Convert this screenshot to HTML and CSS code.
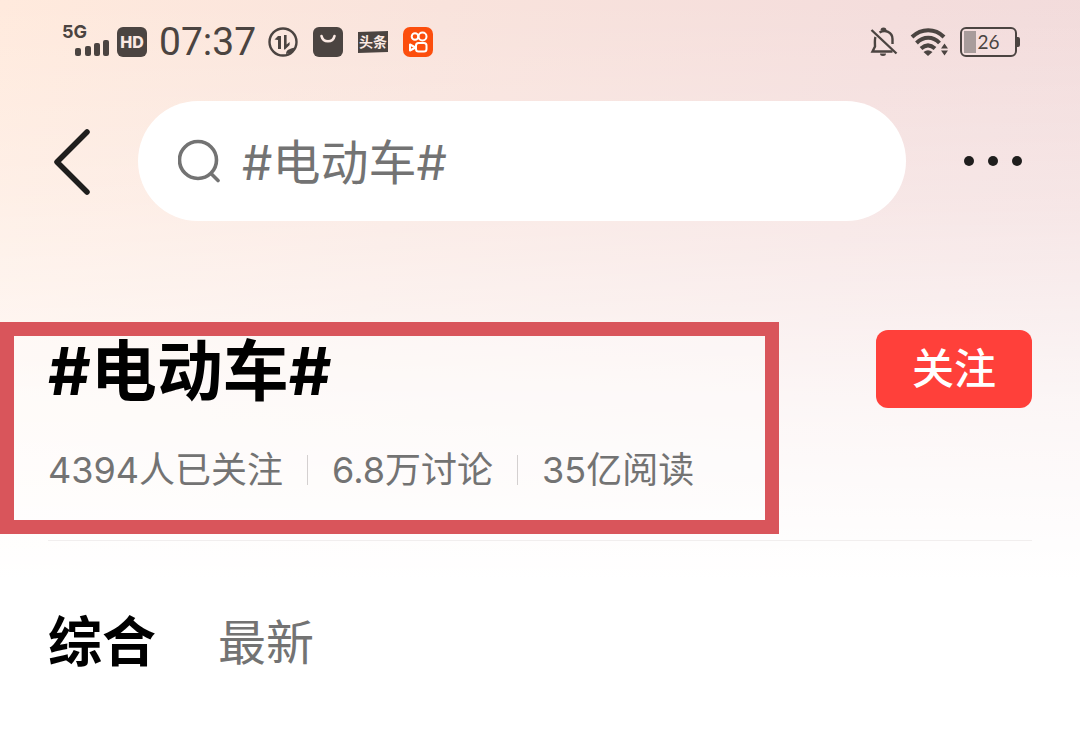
FILE: index.html
```html
<!DOCTYPE html>
<html lang="zh-CN">
<head>
  <meta charset="UTF-8">
  <meta name="viewport" content="width=device-width, initial-scale=1.0">
  <title>#电动车#</title>
  <link rel="stylesheet" href="styles.css">
</head>
<body>
  <div class="status-bar">
    <svg class="signal" width="48" height="48" viewBox="0 -6 48 48">
      <text x="0" y="14" class="signal-label">5G</text>
      <rect x="13" y="24" width="6" height="8" rx="2"/>
      <rect x="23" y="22" width="6" height="10" rx="2"/>
      <rect x="32" y="19" width="6" height="13" rx="2"/>
      <rect x="41" y="16" width="6" height="16" rx="2"/>
    </svg>
    <span class="hd">HD</span>
    <span class="time">07:37</span>
    <div class="apps">
      <svg width="30" height="30" viewBox="0 0 30 30" fill="none" stroke="#4b4441">
        <circle cx="15" cy="15" r="13.5" stroke-width="2.4"/>
        <path d="M6.500 12.500L10 9h3v13h-3v-9z" fill="#4b4441" stroke="none"/>
        <path d="M16 8h2.600v9.500l3-2.500v3L17 22.500h-1z" fill="#4b4441" stroke="none"/>
        <path d="M18 27c0-4 3-5 9-6.500l-3 5z" fill="#4b4441" stroke="none"/>
      </svg>
      <svg width="30" height="30" viewBox="0 0 30 30" fill="none">
        <rect width="30" height="30" rx="6" fill="#4b4441"/>
        <path d="M8.500 9c1.500 7 11.500 7 13 0" stroke="#fbe9e3" stroke-width="2.600" stroke-linecap="round"/>
      </svg>
      <svg width="30" height="30" viewBox="0 0 30 30">
        <path d="M0 5l30-1v21L0 26z" fill="#4b4441"/>
        <text x="15" y="20" class="toutiao">头条</text>
      </svg>
      <svg width="30" height="30" viewBox="0 0 30 30" fill="none" stroke="#fff" stroke-width="2">
        <rect width="30" height="30" rx="7" fill="#fc4e0d" stroke="none"/>
        <circle cx="12" cy="9.500" r="3.300"/>
        <circle cx="19.500" cy="9.500" r="4"/>
        <rect x="13" y="16" width="10.500" height="8.500" rx="2.500"/>
        <path d="M12.500 20.500L7 17.500v6z" stroke-linejoin="round"/>
      </svg>
    </div>
    <div class="system">
      <svg width="28" height="32" viewBox="0 0 28 32" fill="none" stroke="#4b4441" stroke-width="2.400">
        <path d="M5.500 11C4.500 13 5 18 5 20.500L2.500 25.500h20M9.500 6.500C15 3 22.500 6 22.500 13v5"/>
        <path d="M1.500 4l25 23.500"/>
        <path d="M10.500 4.500a3 3 0 0 1 6 0zM10 27.500h6a3 2.500 0 0 1-6 0z" fill="#4b4441" stroke="none"/>
      </svg>
      <svg width="38" height="32" viewBox="0 0 38 32" fill="none" stroke="#4b4441" stroke-width="4">
        <path d="M2 11C11.500 2 25 2 34 11"/>
        <path d="M6.500 17C13.500 10 23 10 29.500 17"/>
        <path d="M11 22.500C15.500 18.500 20.500 18.500 25 22.500"/>
        <path d="M18 30l-4.500-4q4.500-3.500 9 0zM34.500 17.500l3.500 5h-7zM34.500 29.500l3.500-5h-7z" fill="#4b4441" stroke="none"/>
      </svg>
      <div class="battery">26</div>
    </div>
  </div>

  <header class="header">
    <button class="icon-btn" aria-label="返回">
      <svg width="42" height="68" viewBox="0 0 42 68" fill="none" stroke="#1f1e1d" stroke-width="5.500" stroke-linecap="round" stroke-linejoin="round">
        <path d="M39 5L9 35l30 30"/>
      </svg>
    </button>
    <label class="search">
      <svg width="44" height="44" viewBox="0 0 44 44" fill="none" stroke="#737373" stroke-width="3.600" stroke-linecap="round">
        <circle cx="20" cy="21" r="18.500"/>
        <path d="M33.500 35l6.500 6.500"/>
      </svg>
      <input class="search-input" type="text" value="#电动车#" aria-label="搜索">
    </label>
    <button class="icon-btn" aria-label="更多">
      <svg width="60" height="12" viewBox="0 0 60 12" fill="#1f1e1d">
        <circle cx="6" cy="6" r="5"/>
        <circle cx="30" cy="6" r="5"/>
        <circle cx="54" cy="6" r="5"/>
      </svg>
    </button>
  </header>

  <main>
    <section class="topic">
      <div class="topic-info">
        <h1 class="topic-title">#电动车#</h1>
        <ul class="stats">
          <li>4394人已关注</li>
          <li>6.8万讨论</li>
          <li>35亿阅读</li>
        </ul>
      </div>
      <button class="follow">关注</button>
    </section>

    <nav class="tabs">
      <a class="tab active" href="#">综合</a>
      <a class="tab" href="#">最新</a>
    </nav>
  </main>
</body>
</html>
```
FILE: styles.css
```css
* {
  margin: 0;
  padding: 0;
  box-sizing: border-box;
}

body {
  min-height: 100vh;
  font-family: Inter, 'Noto Sans CJK SC', sans-serif;
  color: #000;
  background:
    linear-gradient(to bottom, rgba(255, 255, 255, 0) 0, rgba(255, 255, 255, 0.3) 200px, rgba(255, 255, 255, 0.75) 400px, #fff 580px),
    linear-gradient(105deg, #ffeadd 0%, #f9e3dc 35%, #f4dddc 70%, #f1dadb 100%);
}

button {
  border: none;
  background: none;
  font-family: inherit;
  cursor: pointer;
}

svg {
  display: block;
  flex-shrink: 0;
}

/* Status bar */
.status-bar {
  display: flex;
  align-items: center;
  height: 84px;
  padding: 0 60px 0 62px;
  color: #4b4441;
}

.signal {
  fill: #4b4441;
}

.signal-label {
  font-size: 18px;
  font-weight: 700;
}

.hd {
  width: 30px;
  margin: 0 12px 0 7px;
  border-radius: 6px;
  background: #4b4441;
  color: #fbe9e3;
  font-size: 16px;
  font-weight: 800;
  line-height: 30px;
  text-align: center;
}

.time {
  font-family: Roboto, sans-serif;
  font-size: 39px;
}

.apps {
  display: flex;
  gap: 15px;
  margin-left: 12px;
}

.toutiao {
  fill: #fbe9e3;
  font-size: 14px;
  font-weight: 700;
  text-anchor: middle;
}

.system {
  display: flex;
  align-items: center;
  gap: 12px;
  margin-left: auto;
}

.battery {
  position: relative;
  width: 57px;
  margin-right: 3px;
  border: 2px solid #4b4441;
  border-radius: 6px;
  background: linear-gradient(#a89c9b, #a89c9b) 2px 2px / 12px 22px no-repeat;
  font-family: Lato, sans-serif;
  font-size: 19px;
  line-height: 26px;
  text-align: center;
}

.battery::after {
  content: '';
  position: absolute;
  top: 8px;
  right: -5px;
  width: 3px;
  height: 10px;
  border-radius: 0 2px 2px 0;
  background: #4b4441;
}

/* Search header */
.header {
  display: flex;
  align-items: center;
  padding: 17px 57px 0 48px;
}

.search {
  display: flex;
  flex: 1;
  align-items: center;
  gap: 20px;
  min-width: 0;
  height: 120px;
  margin: 0 57px 0 48px;
  padding: 0 40px;
  border-radius: 60px;
  background: #fff;
}

.search-input {
  flex: 1;
  min-width: 0;
  padding-bottom: 4px;
  border: none;
  outline: none;
  background: none;
  color: #737373;
  font-family: inherit;
  font-size: 48px;
}

/* Topic */
.topic {
  display: flex;
  align-items: flex-start;
  justify-content: space-between;
  margin-top: 101px;
  padding-right: 48px;
}

.topic-info {
  width: 779px;
  max-width: 76%;
  padding: 0 0 28px 34px;
  border: 14px solid #d9555b;
  background: rgba(255, 255, 255, 0.3);
}

.topic-title {
  font-size: 66px;
  font-weight: 700;
  line-height: 70px;
}

.stats {
  display: flex;
  margin-top: 42px;
  color: #737373;
  font-size: 36px;
  line-height: 44px;
  list-style: none;
  white-space: nowrap;
}

.stats li {
  display: flex;
  align-items: center;
}

.stats li + li::before {
  content: '';
  width: 1px;
  height: 30px;
  margin: 0 24px;
  background: #d4d0d0;
}

.follow {
  margin-top: 8px;
  padding: 0 36px;
  border-radius: 12px;
  background: #ff403a;
  color: #fff;
  font-size: 42px;
  font-weight: 500;
  line-height: 78px;
}

/* Tabs */
.tabs {
  display: flex;
  align-items: center;
  gap: 62px;
  margin: 6px 48px 0;
  padding-top: 62px;
  border-top: 1px solid #f1eeee;
}

.tab {
  color: #737373;
  font-size: 48px;
  line-height: 80px;
  text-decoration: none;
}

.tab.active {
  color: #000;
  font-size: 54px;
  font-weight: 700;
}
```
